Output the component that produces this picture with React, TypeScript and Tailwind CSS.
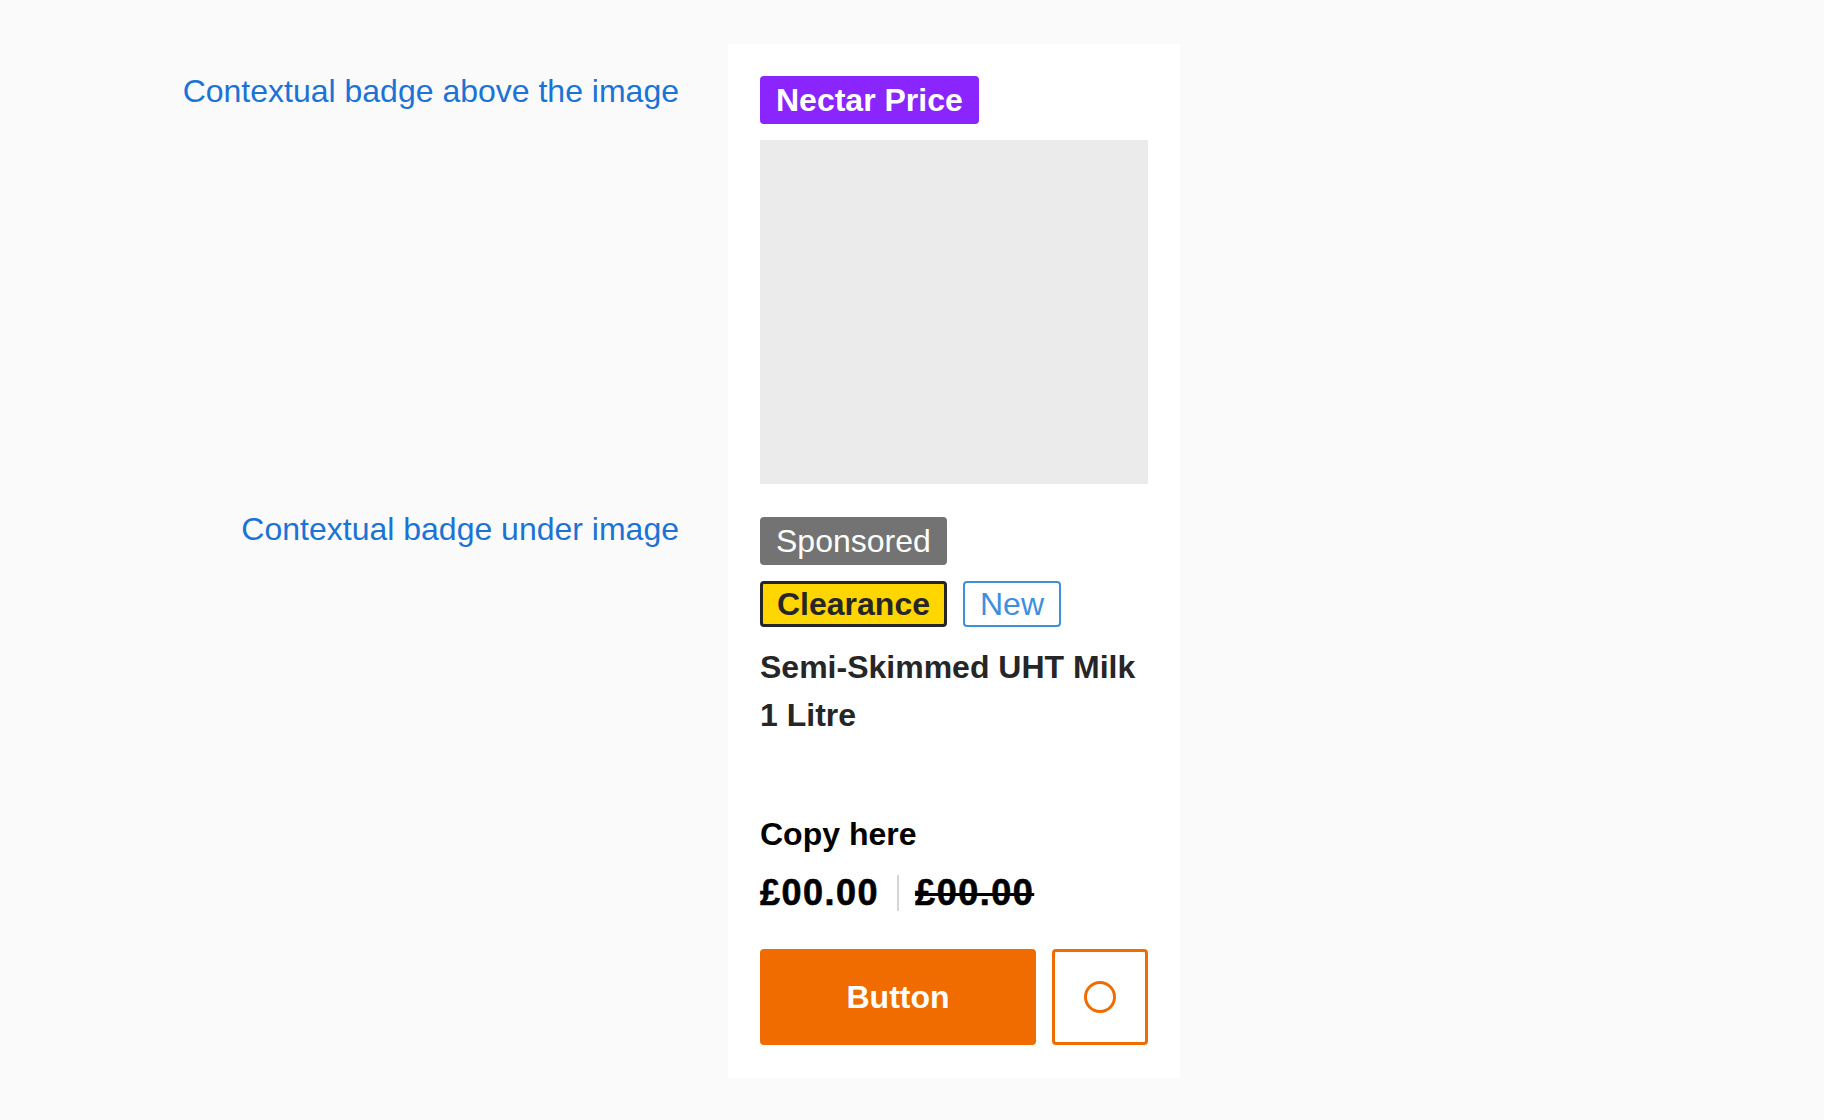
export default function App() {
  return (
    <div className="min-h-screen bg-[#fafafa] font-['Liberation_Sans',Arial,sans-serif]">
      <div className="flex pt-[44px] pb-[44px]">
        <div className="flex w-[679px] shrink-0 flex-col items-end pt-[29px] text-right text-[32px] leading-[37px] text-[#1a73d5]">
          <p>Contextual badge above the image</p>
          <p className="mt-[401px]">Contextual badge under image</p>
        </div>

        <div className="ml-[49px] flex w-[452px] flex-col bg-white px-8 pt-8 pb-[33px]">
          <div className="flex">
            <span className="flex h-[48px] items-center rounded-[4px] bg-[#8a26fd] px-4 text-[32px] font-bold text-white">
              Nectar Price
            </span>
          </div>

          <div className="mt-4 h-[344px] w-full bg-[#ebebeb]" />

          <div className="mt-[33px] flex">
            <span className="flex h-[48px] items-center rounded-[4px] bg-[#737373] px-4 text-[32px] text-white">
              Sponsored
            </span>
          </div>

          <div className="mt-4 flex gap-4">
            <span className="flex h-[46px] items-center rounded-[4px] border-[3px] border-[#262626] bg-[#ffd600] px-[14px] text-[32px] font-bold text-[#262626]">
              Clearance
            </span>
            <span className="flex h-[46px] items-center rounded-[4px] border-2 border-[#3f8fdd] px-[15px] text-[32px] text-[#3f8fdd]">
              New
            </span>
          </div>

          <h2 className="mt-4 text-[32px] font-bold leading-[48px] text-[#262626]">
            Semi-Skimmed UHT Milk 1 Litre
          </h2>

          <p className="mt-[71px] text-[32px] font-bold leading-[48px] text-black">
            Copy here
          </p>

          <div className="mt-[11px] flex h-[48px] items-center text-[36px] font-black tracking-[1.5px] text-black [-webkit-text-stroke:0.6px_black]">
            <span>£00.00</span>
            <span className="ml-[18px] mr-[16px] h-9 w-[2px] bg-[#d6d6d6]" />
            <span className="line-through decoration-[3px]">£00.00</span>
          </div>

          <div className="mt-[32px] flex gap-4">
            <button className="flex h-[96px] w-[276px] items-center justify-center rounded-[4px] bg-[#f06c00] text-[32px] font-bold text-white">
              Button
            </button>
            <button className="flex h-[96px] w-[96px] items-center justify-center rounded-[4px] border-[3px] border-[#f06c00] bg-white">
              <svg width="32" height="32" viewBox="0 0 32 32" fill="none">
                <circle cx="16" cy="16" r="14.5" stroke="#f06c00" strokeWidth="3" />
              </svg>
            </button>
          </div>
        </div>
      </div>
    </div>
  );
}
